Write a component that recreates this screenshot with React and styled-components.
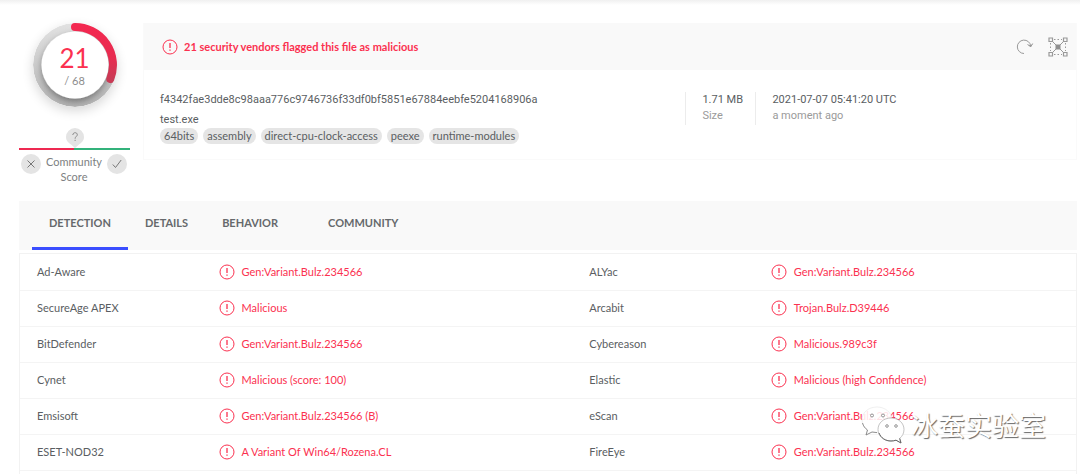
import React from "react";
import styled, { createGlobalStyle } from "styled-components";

const GlobalStyle = createGlobalStyle`
  *, *::before, *::after { box-sizing: border-box; }
  body {
    margin: 0;
    background: #fff;
    color: #5a5e62;
    font-family: Lato, "Noto Sans CJK SC", sans-serif;
    font-size: 11px;
    line-height: 16px;
    overflow: hidden;
  }
`;

const red = "#fb3150";

const Page = styled.main`
  position: relative;
  padding: 0 3px 0 19px;
`;

const TopShade = styled.div`
  height: 5px;
  margin: 0 -3px 0 -19px;
  background: linear-gradient(#f0f0f0, #fff);
`;

const Summary = styled.section`
  display: flex;
  gap: 13px;
  padding-top: 18px;
`;

const ScoreColumn = styled.aside`
  width: 111px;
  flex: none;
  display: flex;
  flex-direction: column;
  align-items: center;
  height: 178px;
`;

const Ring = styled.div`
  position: relative;
  width: 84px;
  height: 84px;
  border-radius: 50%;
  box-shadow: 0 4px 12px rgba(0, 0, 0, 0.16);
`;

const RingDrawing = styled.svg`
  display: block;
`;

const ScoreText = styled.div`
  position: absolute;
  inset: 0;
  padding-top: 2px;
  display: flex;
  flex-direction: column;
  align-items: center;
  justify-content: center;
  color: #8c8c8c;
`;

const Score = styled.strong`
  color: ${red};
  font-size: 26px;
  font-weight: 400;
  line-height: 30px;
`;

const Pin = styled.svg`
  margin-top: 21px;
  display: block;
`;

const VoteBar = styled.div`
  width: 100%;
  height: 2px;
  background: linear-gradient(to right, #ee2951 50%, #33b27b 50%);
`;

const Votes = styled.div`
  width: 100%;
  padding: 4px 3px 0 2px;
  display: flex;
  justify-content: space-between;
  text-align: center;
  line-height: 15px;
  color: #7d7f82;
`;

const VoteButton = styled.button`
  width: 20px;
  height: 20px;
  padding: 0;
  border: 0;
  border-radius: 50%;
  background: #e4e4e4;
  display: grid;
  place-items: center;
`;

const Card = styled.article`
  flex: 1;
  min-width: 0;
  height: 137px;
  border: 1px solid #fafafa;
  border-top: 0;
`;

const CardHeader = styled.header`
  height: 47px;
  padding: 0 8px 0 18px;
  background: #f9f9f9;
  display: flex;
  align-items: center;
  gap: 6px;
`;

const Verdict = styled.h1`
  margin: 0;
  flex: 1;
  font-size: 11px;
  font-weight: 700;
  color: ${red};
`;

const IconButton = styled.button`
  padding: 0;
  border: 0;
  background: none;
  margin-left: 8px;
  display: grid;
`;

const CardBody = styled.div`
  display: flex;
  padding: 22px 0 0 16px;
  font-family: Roboto, sans-serif;
`;

const FileInfo = styled.div`
  flex: 1;
  min-width: 0;
`;

const Line = styled.p`
  margin: 0 0 ${(p) => p.$gap || 0}px;
  color: ${(p) => (p.$soft ? "#9a9a9a" : "inherit")};
  white-space: nowrap;
`;

const Tags = styled.ul`
  margin: 0;
  padding: 0;
  list-style: none;
  display: flex;
  gap: 5px;
  font-family: Lato, sans-serif;
`;

const Tag = styled.li`
  padding: 0 4px;
  border-radius: 8px;
  background: #e5e5e5;
`;

const Fact = styled.div`
  height: 33px;
  padding: 0 16px;
  border-left: 1px solid #ececec;
  width: ${(p) => p.$width};
`;

const Tabs = styled.nav`
  height: 49px;
  padding-left: 13px;
  background: #f9f9f9;
  display: flex;
`;

const Tab = styled.button`
  border: 0;
  border-bottom: 3px solid ${(p) => (p.$active ? "#3b4eff" : "transparent")};
  background: none;
  padding: 0 ${(p) => (p.$loading ? 33 : 17)}px 3px 17px;
  font: 700 11px/16px Lato, sans-serif;
  color: #66696c;
`;

const Results = styled.div`
  margin-top: 3px;
  padding-bottom: 4px;
  border: 1px solid #f2f2f2;
  border-width: 1px 1px 0;
`;

const Table = styled.table`
  width: 100%;
  table-layout: fixed;
  border-collapse: collapse;
`;

const Row = styled.tr`
  height: 36px;
  border-bottom: 1px solid #f4f4f4;
`;

const Vendor = styled.th`
  width: 18.8%;
  padding: 0 0 0 17px;
  text-align: left;
  font-weight: 400;
`;

const Result = styled.td`
  width: ${(p) => p.$width};
  padding: 0;
  color: ${red};
`;

const Finding = styled.span`
  display: flex;
  align-items: center;
  gap: 7px;
`;

const Watermark = styled.div`
  position: absolute;
  right: 34px;
  top: 405px;
  display: flex;
  align-items: center;
  gap: 6px;
  font-family: "Noto Sans CJK SC", sans-serif;
  font-size: 27px;
  line-height: 40px;
  color: #fff;
  text-shadow: 1px 1px 1px #666;
`;

const AlertIcon = () => (
  <svg width="16" height="16" viewBox="0 0 16 16" fill="none" stroke={red} aria-hidden="true">
    <circle cx="8" cy="8" r="7" />
    <path d="M8 4v5M8 10.5v1.3" strokeWidth="1.3" />
  </svg>
);

const ReloadIcon = () => (
  <svg width="18" height="16" viewBox="0 0 18 16" fill="none" stroke="#999">
    <path d="M8 14.5A6.7 6.7 0 1 1 14.7 7" />
    <path d="M11.5 5.500l3.300 2.200 1.900-3.200M12.800 6.200l2 1.300 1.200-2" />
  </svg>
);

const GraphIcon = () => (
  <svg width="20" height="20" viewBox="0 0 20 20" fill="none" stroke="#999">
    <path d="M4.5 4.5l11 11M15.5 4.5l-11 11" />
    <path d="M6 2.5h8M6 17.5h8M2.5 6v8M17.5 6v8" strokeDasharray="1.5 2" />
    <path d="M1 1h3.5v3.5H1zM15.5 1H19v3.5h-3.5zM1 15.5h3.5V19H1zM15.5 15.5H19V19h-3.5z" strokeWidth="1.2" />
    <path d="M7.5 7.5h5v5h-5z" fill="#8f8f8f" stroke="none" />
  </svg>
);

const WeChatIcon = () => (
  <svg width="44" height="38" viewBox="0 0 44 38" aria-hidden="true">
    <g fill="#fff" fillOpacity="0.85" strokeLinejoin="round">
      <path d="M16 1C7.500 1 1 6.500 1 14c0 4 2 7.500 5.500 10L5 29l6-3c2 .6 4 .8 6 .6C26 26 31 20 31 14 31 6.500 24 1 16 1Z" stroke="#e4e4e4" strokeWidth=".6" />
      <path d="M1.500 17c.8 3 2.500 5.300 5 7L5 29l6-3 5 .6" fill="none" stroke="#777" strokeWidth=".8" />
      <path d="M30 12c-7.500 0-13 5-13 11.500S22.500 35 30 35c1.800 0 3.500-.3 5-.8l5 2.800-1.300-4.600c2.700-2.200 4.300-5.300 4.300-8.900C43 17 37.500 12 30 12Z" fillOpacity="1" stroke="#aaa" strokeWidth=".7" />
      <path d="M18 27c2 5 6.500 8 12 8 1.800 0 3.500-.3 5-.8l5 2.800-1.300-4.600" fill="none" stroke="#666" />
    </g>
    <g fill="#fff" stroke="#888" strokeWidth=".9">
      <circle cx="11" cy="9.500" r="1.500" />
      <circle cx="22" cy="9.500" r="1.500" />
      <circle cx="26" cy="20" r="1.300" />
      <circle cx="35" cy="20" r="1.300" />
    </g>
  </svg>
);

const tags = ["64bits", "assembly", "direct-cpu-clock-access", "peexe", "runtime-modules"];

const tabs = [
  { name: "DETECTION", active: true },
  { name: "DETAILS" },
  { name: "BEHAVIOR", loading: true },
  { name: "COMMUNITY" },
];

const rows = [
  ["Ad-Aware", "Gen:Variant.Bulz.234566", "ALYac", "Gen:Variant.Bulz.234566"],
  ["SecureAge APEX", "Malicious", "Arcabit", "Trojan.Bulz.D39446"],
  ["BitDefender", "Gen:Variant.Bulz.234566", "Cybereason", "Malicious.989c3f"],
  ["Cynet", "Malicious (score: 100)", "Elastic", "Malicious (high Confidence)"],
  ["Emsisoft", "Gen:Variant.Bulz.234566 (B)", "eScan", "Gen:Variant.Bulz.234566"],
  ["ESET-NOD32", "A Variant Of Win64/Rozena.CL", "FireEye", "Gen:Variant.Bulz.234566"],
];

function DetectionRing() {
  return (
    <Ring>
      <RingDrawing width="84" height="84" viewBox="0 0 84 84" fill="none">
        <defs>
          <linearGradient id="track" x1="0" y1="0" x2="0" y2="1">
            <stop offset="0" stopColor="#e2e2e2" />
            <stop offset="0.55" stopColor="#c9c9c9" />
            <stop offset="1" stopColor="#b2b2b2" />
          </linearGradient>
          <linearGradient id="arc" x1="0" y1="0" x2="0" y2="1">
            <stop offset="0" stopColor="#f32850" />
            <stop offset="0.6" stopColor="#e72c50" />
            <stop offset="1" stopColor="#c93a55" />
          </linearGradient>
          <filter id="drop" x="-30%" y="-30%" width="160%" height="170%">
            <feDropShadow dx="0" dy="3" stdDeviation="3" floodOpacity="0.35" />
          </filter>
          <clipPath id="disc">
            <circle cx="42" cy="42" r="42" />
          </clipPath>
        </defs>
        <g clipPath="url(#disc)">
          <circle cx="42" cy="42" r="42" fill="url(#track)" />
          <circle cx="42" cy="42" r="33.500" fill="#fff" filter="url(#drop)" />
        </g>
        <path d="M42 4A38 38 0 0 1 77.300 56" stroke="url(#arc)" strokeWidth="8" strokeLinecap="round" />
      </RingDrawing>
      <ScoreText>
        <Score>21</Score>
        <span>/ 68</span>
      </ScoreText>
    </Ring>
  );
}

export default function App() {
  return (
    <>
      <GlobalStyle />
      <Page>
        <TopShade />
        <Summary>
          <ScoreColumn>
            <DetectionRing />
            <Pin width="18" height="20" viewBox="0 0 18 20">
              <path d="M9 0a9 9 0 0 1 9 9c0 4-3 6-5 7.500L9 20l-4-3.500C3 15 0 13 0 9a9 9 0 0 1 9-9Z" fill="#e4e4e4" />
              <path d="M6.800 7c0-3 4.500-3 4.500-.3 0 1.800-2.200 1.800-2.200 4M9.100 11.800v1.200" fill="none" stroke="#888" />
            </Pin>
            <VoteBar />
            <Votes>
              <VoteButton aria-label="Malicious">
                <svg width="8" height="8" viewBox="0 0 8 8" stroke="#777"><path d="M.5.5l7 7M7.500.5l-7 7" /></svg>
              </VoteButton>
              <span>Community<br />Score</span>
              <VoteButton aria-label="Harmless">
                <svg width="10" height="10" viewBox="0 0 10 10" fill="none" stroke="#777"><path d="M.8 5.500L3.500 8.500 9.200 1" /></svg>
              </VoteButton>
            </Votes>
          </ScoreColumn>
          <Card>
            <CardHeader>
              <AlertIcon />
              <Verdict>21 security vendors flagged this file as malicious</Verdict>
              <IconButton aria-label="Reanalyze"><ReloadIcon /></IconButton>
              <IconButton aria-label="Open graph"><GraphIcon /></IconButton>
            </CardHeader>
            <CardBody>
              <FileInfo>
                <Line $gap={4}>f4342fae3dde8c98aaa776c9746736f33df0bf5851e67884eebfe5204168906a</Line>
                <Line>test.exe</Line>
                <Tags>
                  {tags.map((t) => <Tag key={t}>{t}</Tag>)}
                </Tags>
              </FileInfo>
              <Fact $width="70px">
                <Line>1.71 MB</Line>
                <Line $soft>Size</Line>
              </Fact>
              <Fact $width="35%">
                <Line>2021-07-07 05:41:20 UTC</Line>
                <Line $soft>a moment ago</Line>
              </Fact>
            </CardBody>
          </Card>
        </Summary>
        <Tabs>
          {tabs.map((t) => (
            <Tab key={t.name} $active={t.active} $loading={t.loading}>{t.name}</Tab>
          ))}
        </Tabs>
        <Results>
          <Table>
            <tbody>
              {rows.map(([a, ra, b, rb]) => (
                <Row key={a}>
                  <Vendor scope="row">{a}</Vendor>
                  <Result $width="33.5%"><Finding><AlertIcon />{ra}</Finding></Result>
                  <Vendor>{b}</Vendor>
                  <Result $width="28.9%"><Finding><AlertIcon />{rb}</Finding></Result>
                </Row>
              ))}
            </tbody>
          </Table>
        </Results>
        <Watermark>
          <WeChatIcon />
          <span>冰蚕实验室</span>
        </Watermark>
      </Page>
    </>
  );
}
